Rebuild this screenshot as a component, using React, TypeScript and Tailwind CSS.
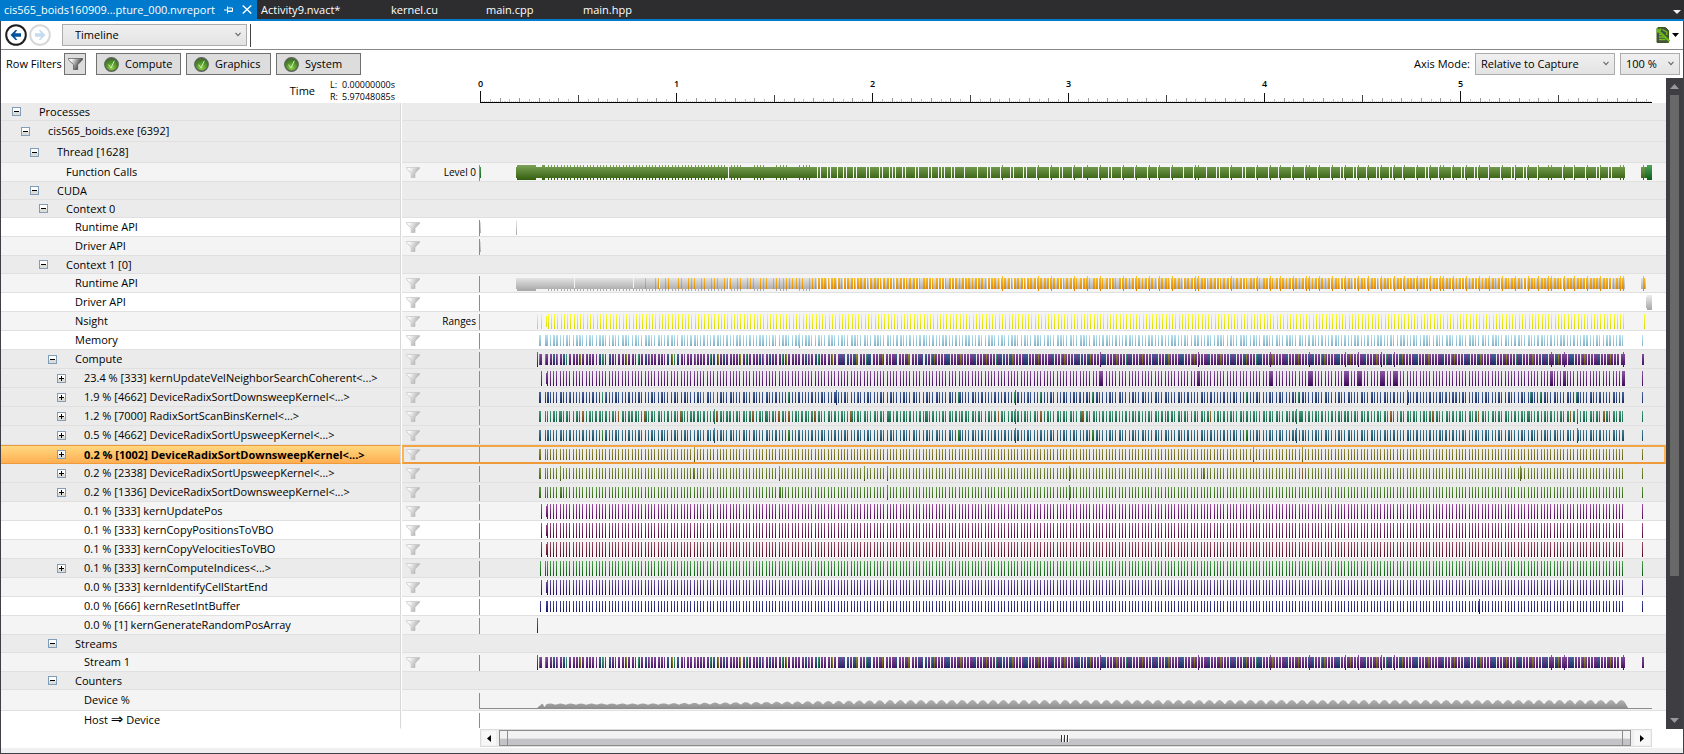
import React from "react";

const SPAN = 1173;
const ORIGIN = 479;

type Bar = [x: number, y: number, w: number, h: number];
type Layer = { colors: [string, string]; bars: Bar[] };
type Row = {
  id: string;
  label: React.ReactNode;
  level: number;
  toggle?: "open" | "closed";
  tone: "group" | "alt" | "plain";
  height: 18 | 19 | 21;
  filter?: boolean;
  caption?: string;
  selected?: boolean;
  track?: "bars" | "area" | "none";
  layers?: Layer[];
};

const short = (x: number, w = 1): Bar => [x - ORIGIN, 4, w, 11];
const tall = (x: number, w = 1): Bar => [x - ORIGIN, 2, w, 15];

const LAUNCH_COUNT = 330;
const launches = Array.from({ length: LAUNCH_COUNT }, (_, i) => Math.floor(547 + i * 3.27));
const LAST = 1642;

const PALETTE: Record<string, [string, string]> = {
  grass: ["#7ba257", "#345e0e"],
  emerald: ["#4fa35a", "#0c5e18"],
  silver: ["#ececec", "#a6a6a6"],
  amber: ["#fcc42e", "#d98000"],
  yellow: ["#ffff3a", "#d6d600"],
  sky: ["#c2ecf8", "#78a8c0"],
  violet: ["#8c58a4", "#3c0858"],
  navy: ["#4f6ca6", "#10265c"],
  teal: ["#4fa386", "#0c583e"],
  rust: ["#a0804c", "#6c380c"],
  ocean: ["#4f86a3", "#0c4058"],
  leaf: ["#4fa352", "#0c580e"],
  olive: ["#a39c4f", "#585008"],
  moss: ["#8ca34f", "#44580a"],
  fern: ["#6ca34f", "#265808"],
  magenta: ["#a64fa6", "#4c0854"],
  plum: ["#a04f86", "#4c083a"],
  wine: ["#a34f68", "#500820"],
  indigo: ["#6e54a3", "#200858"],
  blue: ["#5054a0", "#0c0c58"],
  maroon: ["#a8505a", "#580810"],
};

const layer = (name: string, bars: Bar[]): Layer => ({ colors: PALETTE[name], bars });

/* Kernel rows whose launches fill the full lane height */
function fullKernel(name: string, wide: number[] = []): Layer[] {
  return [
    layer(name, [
      tall(541),
      short(546, 2),
      ...launches.map((x) => tall(x)),
      ...wide.map((x) => tall(x, 3)),
      tall(LAST),
    ]),
  ];
}

/* Kernel rows with several short launches per frame */
function shortKernel(
  name: string,
  wideAt: (i: number) => boolean,
  accent?: string,
  accentAt: number[] = [],
  spikes: number[] = [],
): Layer[] {
  const out = [
    layer(name, [
      short(539, 2),
      short(545),
      ...launches.map((x, i) => short(x, wideAt(i) ? 2 : 1)),
      ...spikes.map((x) => tall(x)),
      short(LAST),
    ]),
  ];
  if (accent) out.push(layer(accent, accentAt.map((x) => short(x))));
  return out;
}

const third = (values: number[], offset: number) => values.map((v) => Math.floor(v / 3) + offset);

const callGaps = [
  574, 633, 659, 728, 817, 820, 827, 830, 837,
  ...third(
    [9, 18, 39, 48, 78, 87, 117, 126, 147, 156, 165, 186, 195, 225, 234, 264, 273, 294, 303, 312, 333, 342, 372, 411,
      441, 450, 480, 510, 519, 549, 558, 588, 627, 657, 666, 696, 726, 774, 804, 813, 843, 882, 921, 951, 990, 1029,
      1059, 1098, 1128, 1137, 1167, 1206, 1215, 1245],
    840,
  ),
  ...third([12, 42, 81, 120, 159, 198, 228, 237, 267, 276, 306, 336, 345, 375, 384], 1264),
  ...third(
    [6, 45, 75, 84, 114, 153, 183, 192, 222, 231, 264, 300, 333, 342, 369, 378, 411, 444, 486, 519, 555, 588, 597, 624,
      633],
    1400,
  ),
];

const callSpikes = [
  ...third([487, 595, 634, 703, 742, 781, 850, 889, 928, 958, 997, 1066, 1075, 1174, 1252], 840),
  ...third([19, 49, 88, 127, 136, 166, 205, 244, 283, 313, 352, 391], 1264),
  ...third([12, 51, 90, 120, 129, 159, 198, 237, 267, 306, 345, 384, 414, 444, 453, 492, 522, 561, 600, 660, 669], 1400),
];

const earlyTicks = launches.filter((x, i) => x < 725 || (x < 817 && i % 7 < 4));

function segments(from: number, to: number, gaps: number[]): Bar[] {
  const out: Bar[] = [];
  let start = from;
  for (const g of gaps) {
    if (g > start) out.push(short(start, g - start));
    start = g + 1;
  }
  if (to > start) out.push(short(start, to - start));
  return out;
}

const callSegments = segments(516, 1625, callGaps);

const functionLayers: Layer[] = [
  layer("emerald", [[1, 4, 1, 11]]),
  layer("grass", [
    ...callSegments,
    tall(517, 19),
    tall(542, 3),
    ...earlyTicks.map((x) => tall(x + 1)),
    ...callSpikes.map((x) => tall(x)),
    short(1641, 5),
    tall(1643),
  ]),
  layer("emerald", [short(1645, 2), tall(1647, 5)]),
];

const earlyOrange = third(
  [736, 766, 775, 796, 805, 835, 844, 865, 874, 883, 904, 913, 934, 943, 952, 973, 982, 991, 1012, 1021, 1042, 1051,
    1060, 1081, 1090, 1099, 1120, 1129, 1138, 1150, 1159, 1168, 1177, 1189, 1198, 1207, 1228, 1237, 1246],
  400,
);

const runtimeLayers: Layer[] = [
  layer("silver", [
    ...callSegments,
    [517 - ORIGIN, 4, 19, 13],
    ...earlyTicks.map((x): Bar => [x + 1 - ORIGIN, 14, 1, 3]),
    short(1641, 5),
  ]),
  layer("amber", [
    ...earlyOrange.map((x) => short(x)),
    ...launches.filter((x) => x > 817).map((x, i) => short(x, i % 4 === 3 ? 1 : 2)),
    ...callSpikes.map((x) => tall(x)),
    tall(1643),
    short(1643, 2),
  ]),
];

const computeSpikes = [1100, 1198, 1270, 1309, 1345, 1358, 1381, 1394, 1551, 1564, 1623];

function computeLayers(): Layer[] {
  const violet: Bar[] = [short(539, 3), short(546, 2)];
  const navy: Bar[] = [];
  const olive: Bar[] = [short(539), short(545)];
  const teal: Bar[] = [];
  const rust: Bar[] = [];
  launches
    .filter((x) => x < 840)
    .forEach((x, i) => {
      violet.push(short(x, x > 700 || i % 3 ? 2 : 1));
      if (i % 7 === 2 || i % 7 === 5) navy.push(short(x + 1));
      if (i % 7 === 3) olive.push(short(x + 1));
      if (i % 11 === 6) teal.push(short(x));
    });
  for (let x = 840, k = 0; x < 1620; x += 13, k++) {
    const block = x > 930 ? 6 : 5;
    violet.push(short(x, block), short(x + 7, 2), short(x + 10, 2));
    navy.push(short(x + (k % 3)));
    if (k % 2) olive.push(short(x + 3));
    else navy.push(short(x + 4));
    if (k % 5 === 2) teal.push(short(x));
    if (k % 4 === 1) rust.push(short(x + 4));
    if (k % 3 === 0 && x < 1100) navy.push(short(x + 8));
  }
  violet.push(short(1621, 4), short(LAST, 2), ...computeSpikes.map((x) => tall(x)));
  return [
    layer("maroon", [tall(537)]),
    layer("violet", violet),
    layer("navy", navy),
    layer("olive", olive),
    layer("teal", teal),
    layer("rust", rust),
  ];
}

const compute = computeLayers();
const wideMix = (i: number) => (i * 2) % 7 < 2;
const teals = [569, 579, 602, 605, 703, 713, 788, 847, 857, 958, 991, 1014, 1027, 1040, 1079, 1092, 1246, 1298, 1445, 1455, 1530, 1540, 1576];
const rusts = [539, 545, 559, 582, 595, 618, 631, 644, 667, 680, 693, 716, 729, 752, 765, 778, 788, 801, 814, 850, 889, 925, 961, 998, 1040, 1082, 1125, 1167, 1210, 1259, 1301, 1347, 1390, 1432, 1478, 1527, 1570, 1604];

const hostToDevice = (
  <>
    Host <span className="font-['DejaVu_Sans',sans-serif] text-[15px]">⇒</span> Device
  </>
);

const rows: Row[] = [
  { id: "proc", label: "Processes", level: 0, toggle: "open", tone: "group", height: 18 },
  { id: "exe", label: "cis565_boids.exe [6392]", level: 1, toggle: "open", tone: "group", height: 21 },
  { id: "thread", label: "Thread [1628]", level: 2, toggle: "open", tone: "group", height: 21 },
  { id: "calls", label: "Function Calls", level: 3, tone: "alt", height: 19, filter: true, caption: "Level 0", track: "bars", layers: functionLayers },
  { id: "cuda", label: "CUDA", level: 2, toggle: "open", tone: "group", height: 18 },
  { id: "ctx0", label: "Context 0", level: 3, toggle: "open", tone: "group", height: 18 },
  { id: "rt0", label: "Runtime API", level: 4, tone: "plain", height: 19, filter: true, track: "bars", layers: [layer("silver", [[1, 4, 1, 11], tall(516)])] },
  { id: "dr0", label: "Driver API", level: 4, tone: "alt", height: 19, filter: true, track: "bars", layers: [layer("silver", [[1, 4, 1, 11]])] },
  { id: "ctx1", label: "Context 1 [0]", level: 3, toggle: "open", tone: "group", height: 18 },
  { id: "rt1", label: "Runtime API", level: 4, tone: "alt", height: 19, filter: true, track: "bars", layers: runtimeLayers },
  { id: "dr1", label: "Driver API", level: 4, tone: "plain", height: 19, filter: true, track: "bars", layers: [layer("silver", [short(1646), tall(1647, 5)])] },
  { id: "nsight", label: "Nsight", level: 4, tone: "alt", height: 19, filter: true, caption: "Ranges", track: "bars", layers: [layer("yellow", [tall(537), tall(541), short(546), ...launches.map((x) => tall(x + 1)), tall(1644)])] },
  { id: "memory", label: "Memory", level: 4, tone: "plain", height: 19, filter: true, track: "bars", layers: [layer("sky", [short(539, 2), short(545, 3), ...launches.map((x, i) => short(x, [2, 3, 6].includes(i % 7) ? 2 : 1)), tall(799), short(LAST)])] },
  { id: "compute", label: "Compute", level: 4, toggle: "open", tone: "group", height: 19, filter: true, track: "bars", layers: compute },
  { id: "k0", label: "23.4 % [333] kernUpdateVelNeighborSearchCoherent<...>", level: 5, toggle: "closed", tone: "group", height: 19, filter: true, track: "bars", layers: fullKernel("violet", [1099, 1197, 1270, 1309, 1345, 1358, 1381, 1394, 1550, 1563, 1622]) },
  { id: "k1", label: "1.9 % [4662] DeviceRadixSortDownsweepKernel<...>", level: 5, toggle: "closed", tone: "group", height: 19, filter: true, track: "bars", layers: shortKernel("navy", wideMix, "teal", teals, [836, 1015, 1407]) },
  { id: "k2", label: "1.2 % [7000] RadixSortScanBinsKernel<...>", level: 5, toggle: "closed", tone: "group", height: 19, filter: true, track: "bars", layers: shortKernel("teal", (i) => i % 7 === 2 || i % 7 === 4 || i % 7 === 6, "rust", rusts, [714, 1015, 1296, 1577]) },
  { id: "k3", label: "0.5 % [4662] DeviceRadixSortUpsweepKernel<...>", level: 5, toggle: "closed", tone: "group", height: 19, filter: true, track: "bars", layers: shortKernel("ocean", wideMix, "leaf", [602, 605, 703, 788, 958, 1092, 1246, 1445], [714, 1015, 1296, 1577]) },
  { id: "k4", label: "0.2 % [1002] DeviceRadixSortDownsweepKernel<...>", level: 5, toggle: "closed", tone: "group", height: 19, filter: true, selected: true, track: "bars", layers: shortKernel("olive", () => false, undefined, [], [694, 1253, 1302]) },
  { id: "k5", label: "0.2 % [2338] DeviceRadixSortUpsweepKernel<...>", level: 5, toggle: "closed", tone: "group", height: 19, filter: true, track: "bars", layers: shortKernel("moss", () => false, "rust", [693, 1203, 1302, 1505], [560, 779, 864, 887, 1069, 1520]) },
  { id: "k6", label: "0.2 % [1336] DeviceRadixSortDownsweepKernel<...>", level: 5, toggle: "closed", tone: "group", height: 19, filter: true, track: "bars", layers: shortKernel("fern", (i) => i === 4 || i === 71, undefined, [], [887, 1069]) },
  { id: "k7", label: "0.1 % [333] kernUpdatePos", level: 5, tone: "alt", height: 19, filter: true, track: "bars", layers: fullKernel("magenta") },
  { id: "k8", label: "0.1 % [333] kernCopyPositionsToVBO", level: 5, tone: "plain", height: 19, filter: true, track: "bars", layers: fullKernel("plum") },
  { id: "k9", label: "0.1 % [333] kernCopyVelocitiesToVBO", level: 5, tone: "alt", height: 19, filter: true, track: "bars", layers: fullKernel("wine") },
  { id: "k10", label: "0.1 % [333] kernComputeIndices<...>", level: 5, toggle: "closed", tone: "group", height: 19, filter: true, track: "bars", layers: [layer("leaf", [tall(540), tall(545), ...launches.map((x) => tall(x)), tall(LAST)])] },
  { id: "k11", label: "0.0 % [333] kernIdentifyCellStartEnd", level: 5, tone: "alt", height: 19, filter: true, track: "bars", layers: fullKernel("indigo") },
  { id: "k12", label: "0.0 % [666] kernResetIntBuffer", level: 5, tone: "plain", height: 19, filter: true, track: "bars", layers: [layer("blue", [short(540), short(546, 2), ...launches.map((x) => short(x)), tall(1479), short(LAST)])] },
  { id: "k13", label: "0.0 % [1] kernGenerateRandomPosArray", level: 5, tone: "alt", height: 19, filter: true, track: "bars", layers: [layer("maroon", [tall(537)])] },
  { id: "streams", label: "Streams", level: 4, toggle: "open", tone: "group", height: 18 },
  { id: "stream1", label: "Stream 1", level: 5, tone: "alt", height: 19, filter: true, track: "bars", layers: compute },
  { id: "counters", label: "Counters", level: 4, toggle: "open", tone: "group", height: 18 },
  { id: "device", label: "Device %", level: 5, tone: "alt", height: 21, track: "area" },
  { id: "host", label: hostToDevice, level: 5, tone: "plain", height: 18, track: "none" },
];

const tones = { group: "bg-[#ebebeb]", alt: "bg-[#f4f4f4]", plain: "bg-white" };
const heights = { 18: "h-[18px]", 19: "h-[19px]", 21: "h-[21px]" };
const indents = ["pl-[11px]", "pl-[20px]", "pl-[29px]", "pl-[38px]", "pl-[47px]", "pl-[56px]"];

const toPath = (bars: Bar[]) => bars.map(([x, y, w, h]) => `M${x} ${y}h${w}v${h}h-${w}z`).join("");

function Lane({ row }: { row: Row }) {
  const layers = row.layers ?? [];
  return (
    <svg className="block h-full w-full" viewBox={`0 0 ${SPAN} ${row.height - 1}`} preserveAspectRatio="none" shapeRendering="crispEdges" aria-hidden="true">
      <defs>
        {layers.map((l, i) => (
          <linearGradient key={i} id={`${row.id}-${i}`} gradientUnits="userSpaceOnUse" x1="0" x2="0" y1="2" y2="17">
            <stop offset="0" stopColor={l.colors[0]} />
            <stop offset="1" stopColor={l.colors[1]} />
          </linearGradient>
        ))}
      </defs>
      {row.track === "area" ? (
        <UsageArea />
      ) : (
        <>
          <rect x="0" y="2" width="1" height="16" fill="#8c8c8c" />
          {layers.map((l, i) => (
            <path key={i} d={toPath(l.bars)} fill={`url(#${row.id}-${i})`} />
          ))}
        </>
      )}
    </svg>
  );
}

function UsageArea() {
  let d = "M58 18";
  for (let x = 58; x <= 1146; x++) {
    const rise = Math.min(1, (x - 58) / 5);
    const trend = x < 170 ? 0 : Math.min(1, (x - 170) / 240);
    const phase = ((x - 66) / 10.3) % 1;
    const wave = Math.abs(Math.sin(Math.PI * phase));
    const h = rise * (2 + (1.5 + 0.4 * trend) * 0.8 + wave * (1.2 + 3.2 * trend));
    const dip = x > 64 && x < 67 ? 0.4 : 1;
    d += `L${x} ${(18 - h * dip).toFixed(1)}`;
  }
  d += "L1149 18Z";
  return (
    <>
      <defs>
        <linearGradient id="usage" gradientUnits="userSpaceOnUse" x1="0" x2="0" y1="9" y2="19">
          <stop offset="0" stopColor="#b8b8b8" />
          <stop offset="1" stopColor="#8a8a8a" />
        </linearGradient>
      </defs>
      <path d={d} fill="url(#usage)" shapeRendering="auto" />
      <rect x="0" y="3" width="1" height="16" fill="#8c8c8c" />
      <rect x="0" y="18" width={SPAN} height="1" fill="#8c8c8c" />
    </>
  );
}

function Funnel({ strong = false }: { strong?: boolean }) {
  const id = strong ? "funnel-strong" : "funnel-soft";
  return (
    <svg className={strong ? "h-[12px] w-[15px]" : "h-[11px] w-[14px]"} viewBox="0 0 14 11" preserveAspectRatio="none" aria-hidden="true">
      <defs>
        <linearGradient id={id} x1="0" x2="1" y1="0" y2="0.4">
          <stop offset="0.25" stopColor={strong ? "#f4f4f4" : "#f8f8f8"} />
          <stop offset="0.9" stopColor={strong ? "#444444" : "#b4b4b4"} />
        </linearGradient>
      </defs>
      <path d="M0.3 0.4H13.7V1.4L9 6.2V10.8H5.2V6.2L0.3 1.4Z" fill={`url(#${id})`} stroke={strong ? "#555" : "#c0c0c0"} strokeWidth="0.7" />
    </svg>
  );
}

function Expander({ state }: { state: "open" | "closed" }) {
  return (
    <button type="button" aria-expanded={state === "open"} aria-label="Toggle row" className="flex h-[9px] w-[9px] shrink-0">
      <svg className="h-[9px] w-[9px]" viewBox="0 0 9 9" shapeRendering="crispEdges" aria-hidden="true">
        <rect width="9" height="9" rx="1" fill="#7f9db9" />
        <rect x="1" y="1" width="7" height="7" fill="#fff" />
        <rect x="1" y="5" width="7" height="3" fill="#dcdcd8" />
        <rect x="2" y="4" width="5" height="1" fill="#000" />
        {state === "closed" && <rect x="4" y="2" width="1" height="5" fill="#000" />}
      </svg>
    </button>
  );
}

function TimelineRow({ row }: { row: Row }) {
  const h = heights[row.height];
  const line = row.id === "host" ? "border-transparent" : "border-[#e0e0e0]";
  return (
    <div role="row" aria-selected={!!row.selected} className={`flex ${h}`}>
      <div
        role="rowheader"
        className={`flex w-[400px] shrink-0 items-center border-r border-r-[#d8d8d8] ${indents[row.level]} ${
          row.selected
            ? "border-y border-y-[#ee9a38] bg-linear-to-b from-[#ffd880] to-[#ffae50] font-bold"
            : `border-b ${line} ${tones[row.tone]}`
        }`}
      >
        {row.toggle ? <Expander state={row.toggle} /> : <span className="w-[9px] shrink-0" />}
        <span className="ml-[18px] truncate leading-4">{row.label}</span>
      </div>
      <div
        role="gridcell"
        className={`relative ml-px flex min-w-0 flex-1 border-b pr-[14px] ${line} ${tones[row.tone]}`}
      >
        <div className="flex w-[77px] shrink-0 items-center justify-between pl-1 pr-[3px]">
          {row.filter && (
            <button type="button" aria-label="Filter row" className="flex">
              <Funnel />
            </button>
          )}
          {row.caption && <span className="text-[10px] leading-4">{row.caption}</span>}
        </div>
        <div className="min-w-0 flex-1">{row.track && <Lane row={row} />}</div>
        {row.selected && (
          <div className="pointer-events-none absolute inset-x-0 top-0 -bottom-px border-2 border-[#fdb450] border-b-[#ee9a38] border-t-[#f3a443]" />
        )}
      </div>
    </div>
  );
}

function Ruler() {
  const ticks: Bar[][] = [[], [], [], [], []];
  for (let i = 0; i <= 598; i++) {
    const x = Math.round(1 + i * 1.96);
    if (i % 100 === 0) ticks[0].push(i % 500 === 0 ? [x, 13, 1, 12] : [x, 15, 1, 10]);
    else if (i % 50 === 0) ticks[1].push([x, 17, 1, 8]);
    else if (i % 10 === 0) ticks[2].push([x, 20, 1, 5]);
    else if (i % 5 === 0) ticks[3].push([x, 21, 1, 4]);
    else ticks[4].push([x, 23, 1, 1]);
  }
  const inks = ["#111", "#444", "#999", "#bbb", "#ccc"];
  return (
    <div className="relative h-[25px] min-w-0 flex-1">
      <svg className="block h-full w-full" viewBox={`0 0 ${SPAN} 25`} preserveAspectRatio="none" shapeRendering="crispEdges" aria-hidden="true">
        {ticks.map((t, i) => (
          <path key={i} d={toPath(t)} fill={inks[i]} />
        ))}
        <rect x="1" y="24" width="1172" height="1" fill="#000" />
      </svg>
      {[0, 1, 2, 3, 4, 5].map((n) => (
        <span
          key={n}
          className="absolute top-0 -translate-x-1/2 text-[9px] font-semibold leading-[11px]"
          style={{ left: `${((1.5 + n * 196) / SPAN) * 100}%` }}
        >
          {n}
        </span>
      ))}
    </div>
  );
}

function Dropdown({ label, value, className, pad }: { label: string; value: string; className: string; pad: string }) {
  return (
    <div className={`relative h-[22px] ${className}`}>
      <select
        aria-label={label}
        defaultValue={value}
        className={`h-full w-full appearance-none border border-[#acacac] bg-linear-to-b from-[#f0f0f0] to-[#e3e3e3] leading-4 outline-none ${pad}`}
      >
        <option>{value}</option>
      </select>
      <svg className="pointer-events-none absolute right-[6px] top-[8px] h-[5px] w-[6px]" viewBox="0 0 6 5" aria-hidden="true">
        <path d="M0.5 0.8L3 3.6L5.5 0.8" fill="none" stroke="#666" strokeWidth="1.1" />
      </svg>
    </div>
  );
}

function FilterToggle({ name }: { name: string }) {
  const id = `check-${name}`;
  return (
    <button type="button" aria-pressed="true" className="flex h-[22px] w-[85px] items-center gap-[6px] border border-[#707070] bg-[#dddddd] pl-[7px]">
      <svg className="h-[15px] w-[15px] shrink-0" viewBox="0 0 15 15" aria-hidden="true">
        <defs>
          <radialGradient id={id} cx="0.5" cy="0.75" r="0.7">
            <stop offset="0" stopColor="#8fd04a" />
            <stop offset="0.6" stopColor="#4f8f2a" />
            <stop offset="1" stopColor="#3c6a2a" />
          </radialGradient>
        </defs>
        <circle cx="7.5" cy="7.5" r="6.7" fill={`url(#${id})`} stroke="#5c6458" strokeWidth="1.4" />
        <path d="M4.6 7.6L7 11L10.3 3.8" fill="none" stroke="#cfeab8" strokeWidth="1" />
      </svg>
      <span className="leading-4">{name}</span>
    </button>
  );
}

function NavArrow({ back = false }: { back?: boolean }) {
  const ring = back ? "#1e1e1e" : "#d8d8d8";
  const ink = back ? "#00539c" : "#c6dcee";
  return (
    <button type="button" aria-label={back ? "Back" : "Forward"} className="flex">
      <svg className="h-[22px] w-[22px]" viewBox="0 0 22 22" aria-hidden="true">
        <circle cx="11" cy="11" r="9.8" fill="#fff" stroke={ring} strokeWidth="2" />
        <path
          d={back ? "M5.5 11L10.5 6H12.3L10 9.3H16V12.7H10L12.3 16H10.5Z" : "M16.5 11L11.5 6H9.7L12 9.3H6V12.7H12L9.7 16H11.5Z"}
          fill={ink}
        />
      </svg>
    </button>
  );
}

function ReportIcon() {
  return (
    <svg className="h-[16px] w-[15px]" viewBox="0 0 15 16" aria-hidden="true">
      <path d="M2 0.5H9.5L12.5 3.5V15.5H1V1.5Z" fill="#4a4f45" stroke="#3c5c1c" />
      <path d="M3 7.5H7M3 10H9M3 12.5H9.5M6.5 2.5L10.8 5V8" fill="none" stroke="#76c421" strokeWidth="1.3" />
      <path d="M1 2L3.4 3.8L5 1.6M0.8 4.4L4 5.2L13.6 14.2" fill="none" stroke="#69bd1a" strokeWidth="2" />
    </svg>
  );
}

function Caret({ className, up = false }: { className: string; up?: boolean }) {
  return (
    <svg className={className} viewBox="0 0 8 4" preserveAspectRatio="none" aria-hidden="true">
      <path d={up ? "M0 4H8L4 0Z" : "M0 0H8L4 4Z"} fill="currentColor" />
    </svg>
  );
}

function TabStrip() {
  return (
    <header className="flex h-[21px] shrink-0 items-stretch border-b-2 border-[#007acc] bg-[#2d2d30] text-white">
      <div className="flex w-[257px] shrink-0 items-center bg-[#007acc] pl-1">
        <a href="#report" className="w-[220px] whitespace-nowrap leading-4">cis565_boids160909...pture_000.nvreport</a>
        <button type="button" aria-label="Pin tab" className="flex w-[18px]">
          <svg className="h-[8px] w-[9px]" viewBox="0 0 9 8" fill="none" stroke="#fff" aria-hidden="true">
            <path d="M0 4H3M3.5 0.5V7.5M3.5 2H8.5V5.5H3.5M3.5 5H8.5" />
          </svg>
        </button>
        <button type="button" aria-label="Close tab" className="flex">
          <svg className="h-[9px] w-[10px]" viewBox="0 0 10 9" fill="none" stroke="#fff" strokeWidth="1.4" aria-hidden="true">
            <path d="M0.7 0.5L9.3 8.5M9.3 0.5L0.7 8.5" />
          </svg>
        </button>
      </div>
      <nav className="flex flex-1 items-center pl-1 leading-4">
        <a href="#activity" className="w-[130px]">Activity9.nvact*</a>
        <a href="#kernel" className="w-[95px]">kernel.cu</a>
        <a href="#maincpp" className="w-[97px]">main.cpp</a>
        <a href="#mainhpp">main.hpp</a>
      </nav>
      <button type="button" aria-label="Open documents" className="mr-[3px] flex items-center pt-1 text-[#f1f1f1]">
        <Caret className="h-[4px] w-[8px]" />
      </button>
    </header>
  );
}

function HorizontalScroll() {
  return (
    <div className="ml-[479px] mr-[31px] flex h-[18px] items-center border border-[#dcdcdc] bg-[#efefef] px-px">
      <button type="button" aria-label="Scroll left" className="flex h-[14px] w-[14px] items-center justify-center bg-[#f8f8f8]">
        <svg className="h-[7px] w-[4px]" viewBox="0 0 4 7" aria-hidden="true"><path d="M4 0V7L0 3.5Z" /></svg>
      </button>
      <div className="mx-[3px] flex h-[16px] flex-1 items-stretch border border-[#8c8c8c] bg-linear-to-b from-[#f2f2f2] from-50% to-[#c4c4c8] to-60%">
        <div className="w-2 border-r border-[#8c8c8c]" />
        <div className="flex flex-1 items-center justify-center gap-px">
          {[0, 1, 2].map((n) => (
            <span key={n} className="h-[7px] w-[2px] border-l border-[#333] bg-white" />
          ))}
        </div>
        <div className="w-2 border-l border-[#8c8c8c]" />
      </div>
      <button type="button" aria-label="Scroll right" className="flex h-[14px] w-[16px] items-center justify-center bg-[#f8f8f8]">
        <svg className="h-[7px] w-[4px]" viewBox="0 0 4 7" aria-hidden="true"><path d="M0 0V7L4 3.5Z" /></svg>
      </button>
    </div>
  );
}

export default function App() {
  return (
    <div className="flex min-h-screen flex-col bg-[#f0f0f0] font-['Open_Sans','Noto_Sans',sans-serif] text-[11px] text-black">
      <TabStrip />
      <main className="flex flex-1 flex-col border-x border-b border-[#3f3f46]">
        <div className="bg-white">
          <div className="flex h-[29px] items-center border-b border-[#888888] pl-1 pr-[4px]">
            <div className="flex gap-[2px]">
              <NavArrow back />
              <NavArrow />
            </div>
            <Dropdown label="View" value="Timeline" className="ml-[11px] w-[185px]" pad="pl-[12px]" />
            <div className="ml-[3px] h-[23px] w-px bg-[#444]" />
            <button type="button" aria-label="Report options" className="ml-auto flex items-center gap-[1px]">
              <ReportIcon />
              <Caret className="h-[4px] w-[7px]" />
            </button>
          </div>

          <div className="flex h-[28px] items-center pl-[5px] pr-[3px]">
            <span className="w-[58px] whitespace-nowrap leading-4">Row Filters</span>
            <button type="button" aria-label="Filter rows" className="mr-[10px] flex h-[22px] w-[22px] items-center justify-center border border-[#707070] bg-[#dddddd]">
              <Funnel strong />
            </button>
            <div className="flex gap-[5px]">
              <FilterToggle name="Compute" />
              <FilterToggle name="Graphics" />
              <FilterToggle name="System" />
            </div>
            <span className="ml-auto mr-[5px] leading-4">Axis Mode:</span>
            <Dropdown label="Axis Mode" value="Relative to Capture" className="mr-[5px] w-[140px]" pad="pl-[5px]" />
            <Dropdown label="Zoom" value="100 %" className="w-[60px]" pad="pl-[5px]" />
          </div>

          <div className="flex">
            <div className="min-w-0 flex-1">
              <div className="flex h-[25px] pr-[14px]">
                <div className="flex w-[478px] shrink-0 items-center">
                  <span className="w-[314px] text-right leading-4">Time</span>
                  <div className="ml-[15px] grid grid-cols-[12px_auto] text-[9px] leading-3">
                    <span>L:</span>
                    <span>0.00000000s</span>
                    <span>R:</span>
                    <span>5.97048085s</span>
                  </div>
                </div>
                <Ruler />
              </div>
              <div role="treegrid" aria-label="Timeline rows">
                {rows.map((row) => (
                  <TimelineRow key={row.id} row={row} />
                ))}
              </div>
            </div>
            <div className="flex w-[17px] shrink-0 flex-col items-center bg-[#3e3e42] text-[#999]">
              <button type="button" aria-label="Scroll up" className="flex h-[17px] items-center">
                <Caret up className="h-[5px] w-[9px]" />
              </button>
              <div className="flex w-[9px] flex-1 flex-col">
                <div className="h-[78%] bg-[#686868]" />
              </div>
              <button type="button" aria-label="Scroll down" className="flex h-[17px] items-center">
                <Caret className="h-[5px] w-[9px]" />
              </button>
            </div>
          </div>
          <HorizontalScroll />
          <div className="h-px" />
        </div>
      </main>
    </div>
  );
}
